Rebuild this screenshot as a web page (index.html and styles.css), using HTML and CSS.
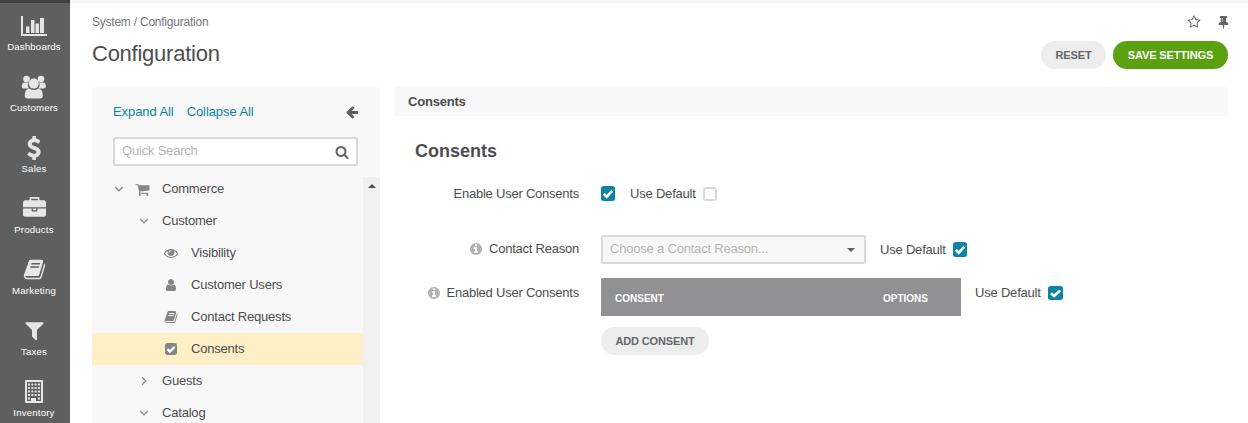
FILE: index.html
```
<!DOCTYPE html>
<html lang="en">
<head>
<meta charset="utf-8">
<title>Configuration</title>
<link rel="stylesheet" href="styles.css">
</head>
<body>
<svg class="defs" width="0" height="0">
  <symbol id="book" viewBox="0 0 1792 1792"><path d="M1703 478q40 57 18 129l-275 906q-19 64-76.5 107.5t-122.5 43.5h-923q-77 0-148.5-53.5t-99.5-131.5q-24-67-2-127 0-4 3-27t4-37q1-8-3-21.5t-3-19.5q2-11 8-21t16.5-23.5 16.5-23.5q23-38 45-91.5t30-91.5q3-10 .5-30t-.5-28q3-11 17-28t17-23q21-36 42-92t25-90q1-9-2.5-32t.5-28q4-13 22-30.5t22-22.5q19-26 42.5-84.5t27.5-96.5q1-8-3-25.5t-2-26.5q2-8 9-18t18-23 17-21q8-12 16.5-30.5t15-35 16-36 19.5-32 26.5-23.5 36-11.5 47.5 5.500l-1 3q38-9 51-9h761q74 0 114 56t18 130l-274 906q-36 119-71.5 153.5t-128.5 34.5h-869q-27 0-38 15-11 16-1 43 24 70 144 70h923q29 0 56-15.5t35-41.5l300-987q7-22 5-57 38 15 59 43zm-1064 2q-4 13 2 22.5t20 9.5h608q13 0 25.5-9.5t16.5-22.5l21-64q4-13-2-22.5t-20-9.5h-608q-13 0-25.5 9.5t-16.5 22.5zm-83 256q-4 13 2 22.5t20 9.5h608q13 0 25.5-9.5t16.5-22.5l21-64q4-13-2-22.5t-20-9.5h-608q-13 0-25.5 9.5t-16.5 22.5z"/></symbol>
  <symbol id="check" viewBox="0 0 14 14" preserveAspectRatio="none"><rect width="14" height="14" rx="2.500"/><path class="tick" d="M2.800 7.200L5.700 10 11.300 4.300"/></symbol>
  <symbol id="info" viewBox="128 128 1536 1536"><path d="M1152 1376v-160q0-14-9-23t-23-9h-96v-512q0-14-9-23t-23-9h-320q-14 0-23 9t-9 23v160q0 14 9 23t23 9h96v320h-96q-14 0-23 9t-9 23v160q0 14 9 23t23 9h448q14 0 23-9t9-23zm-128-896v-160q0-14-9-23t-23-9h-192q-14 0-23 9t-9 23v160q0 14 9 23t23 9h192q14 0 23-9t9-23zm640 416q0 209-103 385.500t-279.500 279.500-385.500 103-385.500-103-279.500-279.500-103-385.500 103-385.500 279.500-279.500 385.500-103 385.500 103 279.500 279.500 103 385.500z"/></symbol>
  <symbol id="down" viewBox="0 0 10 6"><path class="line" d="M1.200 1L5 4.800 8.800 1"/></symbol>
</svg>
<div class="topline"><span></span></div>
<div class="app">
  <nav class="menu">
    <a class="item"><svg width="26" height="24" viewBox="0 0 26 24"><path d="M0 2h2v18h24v2H0zM5 12.500h3.500V19H5zM10 6h3.500v13H10zM14.500 9.500h3.500V19h-3.500zM19 4h4v15h-4z"/></svg><span>Dashboards</span></a>
    <a class="item"><svg width="26" height="24" viewBox="0 0 26 24"><circle cx="5.500" cy="4" r="3.300"/><circle cx="20" cy="4" r="3.300"/><path d="M3 7.500h4.500Q6 10 8 13.500H2.800Q.7 13.500.7 11.500 .9 8 3 7.500zM22.500 7.500H18q1.500 2.500-.5 6h5.200q2.200 0 2.200-2Q24.700 8 22.500 7.500z"/><circle cx="12.800" cy="8.600" r="5"/><path d="M8.300 13.500q4.500 3.200 9 0 4.500.5 4.500 7 0 3-3 3h-12q-3 0-3-3 0-6.500 4.500-7z"/></svg><span>Customers</span></a>
    <a class="item"><svg class="dollar" width="24" height="24" viewBox="0 0 1792 1792"><path d="M1362 1185q0 153-99.500 263.500t-258.500 136.500v175q0 14-9 23t-23 9h-135q-13 0-22.500-9.500t-9.500-22.500v-175q-66-9-127.500-31t-101.500-44.500-74-48-46.500-37.500-17.500-18q-17-21-2-41l103-135q7-10 23-12 15-2 24 9l2 2q113 99 243 125 37 8 74 8 81 0 142.500-43t61.500-122q0-28-15-53t-33.500-42-58.500-37.500-66-32-80-32.500q-39-16-61.500-25t-61.500-26.500-62.500-31-56.500-35.500-53.500-42.500-43.500-49-35.500-58-21-66.500-8.500-78q0-138 98-242t255-134v-180q0-13 9.500-22.500t22.500-9.500h135q14 0 23 9t9 23v176q57 6 110.500 23t87 33.500 63.500 37.500 39 29 15 14q17 18 5 38l-81 146q-8 15-23 16-14 3-27-7-3-3-14.500-12t-39-26.500-58.500-32-74.500-26-85.500-11.500q-95 0-155 43t-60 111q0 26 8.500 48t29.500 41.500 39.500 33 56 31 60.500 27 70 27.500q53 20 81 31.500t76 35 75.500 42.500 62 50 53 63.500 31.500 76.500 13 94z"/></svg><span>Sales</span></a>
    <a class="item"><svg width="23" height="23" viewBox="0 0 1792 1792"><path d="M640 256h512v-128h-512v128zm1152 640v480q0 66-47 113t-113 47h-1472q-66 0-113-47t-47-113v-480h672v160q0 26 19 45t45 19h320q26 0 45-19t19-45v-160h672zm-768 0v128h-256v-128h256zm768-480v384h-1792v-384q0-66 47-113t113-47h352v-160q0-40 28-68t68-28h576q40 0 68 28t28 68v160h352q66 0 113 47t47 113z"/></svg><span>Products</span></a>
    <a class="item"><svg width="23" height="23"><use href="#book"/></svg><span>Marketing</span></a>
    <a class="item"><svg width="23" height="23" viewBox="0 0 1792 1792"><path d="M1595 295q17 41-14 70l-493 493v742q0 42-39 59-13 5-25 5-27 0-45-19l-256-256q-19-19-19-45v-486l-493-493q-31-29-14-70 17-39 59-39h1280q42 0 59 39z"/></svg><span>Taxes</span></a>
    <a class="item"><svg width="18" height="24" viewBox="0 0 18 24"><path fill-rule="evenodd" d="M1 0h16q1 0 1 1v21q0 1-1 1H1q-1 0-1-1V1q0-1 1-1zM2 2v19h4v-3h5v3h5V2z"/><path d="M3 3.500h2v2H3zm3.300 0h2v2h-2zm3.300 0h2v2h-2zm3.300 0h2v2h-2zM3 7h2v2H3zm3.300 0h2v2h-2zm3.300 0h2v2h-2zm3.300 0h2v2h-2zM3 10.500h2v2H3zm3.300 0h2v2h-2zm3.300 0h2v2h-2zm3.300 0h2v2h-2zM3 14h2v2H3zm3.300 0h2v2h-2zm3.300 0h2v2h-2zm3.300 0h2v2h-2zM3 17.500h2v2H3zm9.900 0h2v2h-2z"/></svg><span>Inventory</span></a>
  </nav>
  <main class="page">
    <div class="crumbs">
      <span>System / Configuration</span>
      <div class="tools">
        <svg width="14" height="14" viewBox="0 0 1792 1792"><path d="M1201 1004l306-297-422-62-189-382-189 382-422 62 306 297-73 421 378-199 377 199zm527-357q0 22-26 48l-363 354 86 500q1 7 1 20 0 50-41 50-19 0-40-12l-449-236-449 236q-22 12-40 12-21 0-31.500-14.500t-10.500-35.500q0-6 2-20l86-500-364-354q-25-27-25-48 0-37 56-46l502-73 225-455q19-41 49-41t49 41l225 455 502 73q56 9 56 46z"/></svg>
        <svg width="15" height="14" viewBox="0 0 1792 1792" preserveAspectRatio="none"><path d="M800 864v-448q0-14-9-23t-23-9-23 9-9 23v448q0 14 9 23t23 9 23-9 9-23zm672 352q0 26-19 45t-45 19h-429l-51 483q-2 12-10.500 20.500t-20.500 8.500h-1q-27 0-32-27l-76-485h-404q-26 0-45-19t-19-45q0-123 78.500-221.500t177.500-98.500v-512q-52 0-90-38t-38-90 38-90 90-38h640q52 0 90 38t38 90-38 90-90 38v512q99 0 177.500 98.500t78.500 221.500z"/></svg>
      </div>
    </div>
    <header class="head">
      <h1>Configuration</h1>
      <div class="actions"><button class="btn reset">RESET</button><button class="btn save">SAVE SETTINGS</button></div>
    </header>
    <div class="columns">
      <aside class="panel">
        <div class="links"><a class="expand">Expand All</a><a class="collapse">Collapse All</a>
          <svg width="14" height="14" viewBox="0 0 1792 1792"><path d="M1664 896v128q0 53-32.500 90.500t-84.500 37.500h-704l293 294q38 36 38 90t-38 90l-75 76q-37 37-90 37-52 0-91-37l-651-652q-37-37-37-90 0-52 37-91l651-650q38-38 91-38 52 0 90 38l75 74q38 38 38 91t-38 91l-293 293h704q52 0 84.500 37.500t32.500 90.500z"/></svg></div>
        <div class="search"><span>Quick Search</span>
          <svg width="14" height="14" viewBox="0 0 1792 1792"><path d="M1216 832q0-185-131.500-316.500t-316.500-131.500-316.500 131.500-131.500 316.500 131.500 316.500 316.500 131.500 316.500-131.500 131.500-316.500zm512 832q0 52-38 90t-90 38q-54 0-90-38l-343-342q-179 124-399 124-143 0-273.500-55.500t-225-150-150-225-55.500-273.500 55.500-273.500 150-225 225-150 273.500-55.500 273.500 55.500 225 150 150 225 55.500 273.500q0 220-124 399l343 343q37 37 37 90z"/></svg></div>
        <div class="scroller">
          <div class="tree">
            <div class="node top"><svg class="chev" width="10" height="6"><use href="#down"/></svg>
              <svg class="cart" width="15" height="15" viewBox="0 0 1792 1792"><path d="M704 1536q0 52-38 90t-90 38-90-38-38-90 38-90 90-38 90 38 38 90zm896 0q0 52-38 90t-90 38-90-38-38-90 38-90 90-38 90 38 38 90zm128-1088v512q0 24-16.500 42.500t-40.500 21.500l-1044 122q13 60 13 70 0 16-24 64h920q26 0 45 19t19 45-19 45-45 19h-1024q-26 0-45-19t-19-45q0-11 8-31.500t16-36 21.500-40 15.500-29.500l-177-823h-204q-26 0-45-19t-19-45 19-45 45-19h256q16 0 28.500 6.500t19.500 15.500 13 24.500 8 26 5.500 29.500 4.500 26h1201q26 0 45 19t19 45z"/></svg><span>Commerce</span></div>
            <div class="node group"><svg class="chev" width="10" height="6"><use href="#down"/></svg><span>Customer</span></div>
            <div class="node leaf"><svg width="14" height="14" viewBox="0 0 1792 1792"><path d="M1664 960q-152-236-381-353 61 104 61 225 0 185-131.500 316.500t-316.500 131.500-316.500-131.500-131.500-316.500q0-121 61-225-229 117-381 353 133 205 333.500 326.500t434.500 121.500 434.500-121.500 333.500-326.500zm-720-384q0-20-14-34t-34-14q-125 0-214.500 89.500t-89.500 214.500q0 20 14 34t34 14 34-14 14-34q0-86 61-147t147-61q20 0 34-14t14-34zm848 384q0 34-20 69-140 230-376.500 368.500t-499.500 138.500-499.500-139-376.500-368q-20-35-20-69t20-69q140-229 376.500-368t499.500-139 499.500 139 376.500 368q20 35 20 69z"/></svg><span>Visibility</span></div>
            <div class="node leaf"><svg width="14" height="14" viewBox="0 0 1792 1792"><path d="M1536 1399q0 109-62.500 187t-150.500 78h-854q-88 0-150.500-78t-62.500-187q0-85 8.500-160.500t31.500-152 58.500-131 94-89 134.500-34.500q131 128 313 128t313-128q76 0 134.500 34.500t94 89 58.500 131 31.500 152 8.500 160.500zm-256-887q0 159-112.500 271.500t-271.500 112.500-271.500-112.500-112.500-271.500 112.500-271.500 271.500-112.500 271.500 112.500 112.500 271.500z"/></svg><span>Customer Users</span></div>
            <div class="node leaf"><svg width="14" height="14"><use href="#book"/></svg><span>Contact Requests</span></div>
            <div class="node leaf selected"><svg width="12" height="12"><use href="#check"/></svg><span>Consents</span></div>
            <div class="node group"><svg class="chev" width="6" height="10" viewBox="0 0 6 10"><path class="line" d="M1 1.200L4.800 5 1 8.800"/></svg><span>Guests</span></div>
            <div class="node group"><svg class="chev" width="10" height="6"><use href="#down"/></svg><span>Catalog</span></div>
          </div>
          <div class="bar"><i class="up"></i></div>
        </div>
      </aside>
      <section class="content">
        <div class="section-bar">Consents</div>
        <h2>Consents</h2>
        <div class="row first"><div class="label"><span>Enable User Consents</span></div><svg class="box" width="14" height="15"><use href="#check"/></svg><span class="def">Use Default</span><i class="empty"></i></div>
        <div class="row second"><div class="label"><svg width="12" height="12"><use href="#info"/></svg><span>Contact Reason</span></div>
          <div class="select"><span>Choose a Contact Reason...</span><i class="caret"></i></div><span class="def">Use Default</span><svg class="box" width="14" height="15"><use href="#check"/></svg></div>
        <div class="row third"><div class="label"><svg width="12" height="12"><use href="#info"/></svg><span>Enabled User Consents</span></div>
          <div class="grid"><div class="thead"><span>CONSENT</span><span>OPTIONS</span></div><button class="btn add">ADD CONSENT</button></div><span class="def">Use Default</span><svg class="box" width="15" height="14"><use href="#check"/></svg></div>
      </section>
    </div>
  </main>
</div>
</body>
</html>
```
FILE: styles.css
```
* { box-sizing: border-box; }
body { margin: 0; height: 423px; overflow: hidden; background: #fff; color: #4d4d4f; font: 13px/16px "Liberation Sans", Arial, sans-serif; letter-spacing: -0.2px; }
svg { display: block; flex: none; fill: currentColor; }
.defs { position: absolute; }
.line { fill: none; stroke: currentColor; stroke-width: 1.2; }
.tick { fill: none; stroke: #fff; stroke-width: 2.6; }
h1, h2 { margin: 0; }
.topline { height: 3px; background: #f7f7f7; }
.topline span { display: block; width: 70px; height: 3px; background: #404040; }
.app { display: flex; height: 420px; }
.menu { flex: none; width: 70px; background: #5f5f60; color: #e6e6e6; overflow: hidden; padding-top: 11px; }
.item { display: flex; flex-direction: column; align-items: center; justify-content: space-between; height: 39px; margin-bottom: 22px; padding-right: 2px; font-size: 9.6px; line-height: 12px; letter-spacing: 0.2px; color: #fff; }
.item svg { color: #e6e6e6; }
.dollar { stroke: currentColor; stroke-width: 60; }
.page { flex: 1; min-width: 0; padding: 11px 20px 0 22px; }
.crumbs { display: flex; justify-content: space-between; height: 16px; font-size: 12px; letter-spacing: -0.23px; color: #777; }
.tools { display: flex; gap: 15px; margin-right: -3px; padding-top: 1px; color: #63636a; }
.head { display: flex; justify-content: space-between; height: 57px; padding-top: 11px; }
h1 { font-size: 22px; line-height: 26px; font-weight: 400; letter-spacing: -0.25px; }
.actions { display: flex; gap: 7px; }
.btn { height: 28px; border: 0; border-radius: 14px; padding: 0; background: #ededed; color: #66666a; font: bold 11px/28px "Liberation Sans", Arial, sans-serif; letter-spacing: -0.13px; }
.reset { width: 65px; }
.save { width: 115px; background: #5ba10f; color: #fff; }
.columns { display: flex; gap: 14px; }
.panel { flex: none; width: 288px; height: 336px; background: #f8f8f8; border-radius: 4px 4px 0 0; display: flex; flex-direction: column; }
.links { display: flex; align-items: center; height: 50px; padding: 0 21px; color: #0c84a3; letter-spacing: -0.08px; }
.links svg { margin-left: auto; color: #5c5c60; }
.collapse { margin-left: 13px; }
.search { display: flex; flex: none; justify-content: space-between; align-items: center; width: 245px; height: 29px; margin-left: 21px; border: 2px solid #d9d9d9; border-radius: 2px; background: #fff; padding: 0 7px; color: #b5b5b5; }
.search span { padding-bottom: 2px; }
.search svg { color: #63636a; }
.scroller { display: flex; flex: 1; min-height: 0; margin-top: 11px; overflow: hidden; }
.tree { width: 271px; margin-top: -4px; }
.node { display: flex; align-items: center; height: 32px; }
.node svg { color: #858588; }
.top { padding-left: 22px; }
.cart { margin: 0 12px 0 11px; }
.group .chev { width: 10px; margin-right: 13px; }
.group { padding-left: 47px; }
.leaf { padding-left: 72px; }
.leaf svg { margin-right: 13px; }
.selected svg { margin: 0 14px 0 1px; }
.selected { background: #ffefc6; }
.bar { width: 17px; background: #f0f0f0; padding: 7px 0 0 5px; }
.up { display: block; width: 0; border: 4px solid transparent; border-top: 0; border-bottom-color: #505050; }
.content { flex: 1; min-width: 0; }
.section-bar { height: 29px; border-radius: 3px; background: #f8f8f8; padding-left: 14px; line-height: 29px; font-weight: 700; }
h2 { margin: 23px 0 0 21px; font-size: 18px; line-height: 24px; letter-spacing: 0; }
.row { display: flex; }
.label { display: flex; justify-content: flex-end; align-items: center; gap: 7px; width: 185px; height: 16px; margin-right: 22px; letter-spacing: -0.23px; }
.label svg { color: #b3b3b3; }
.box { color: #0c84a3; }
.first { height: 49px; margin-top: 23px; }
.first .box { margin-right: 15px; }
.empty { width: 14px; height: 14px; margin: 1px 0 0 7px; border: 2px solid #d9d9d9; border-radius: 3px; }
.second { height: 43px; }
.second .label { margin-top: 6px; }
.select { display: flex; justify-content: space-between; align-items: center; width: 265px; height: 29px; border: 2px solid #d9d9d9; border-radius: 2px; background: #f8f8f8; padding: 0 9px 2px 7px; color: #b5b5b5; }
.caret { margin-top: 2px; border: 4.5px solid transparent; border-bottom: 0; border-top-color: #5f5f64; }
.second .def { margin: 7px 7px 0 14px; }
.second .box { margin-top: 7px; }
.third .label { margin-top: 7px; }
.grid { width: 360px; }
.thead { display: flex; justify-content: space-between; height: 38px; margin-bottom: 11px; padding: 0 33px 0 14px; border-radius: 1px 1px 0 0; background: #919193; color: #fff; font-size: 10px; line-height: 41px; font-weight: 700; letter-spacing: 0; }
.add { width: 108px; }
.third .def { margin: 7px 7px 0 14px; }
.third .box { margin-top: 8px; }
```
